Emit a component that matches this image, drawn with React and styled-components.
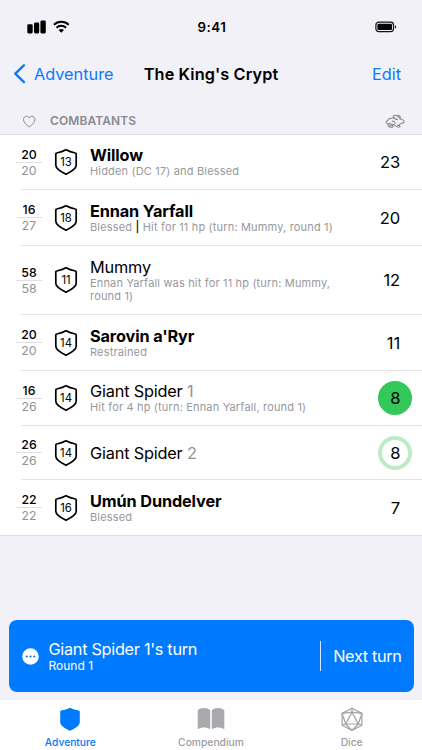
import React from 'react';
import styled, {createGlobalStyle} from 'styled-components';

const GlobalStyle = createGlobalStyle`
    * {
        box-sizing: border-box;
    }

    body {
        margin: 0;
        background: #f2f1f7;
        font-family: Inter, "Liberation Sans", sans-serif;
        color: #000;
    }
`;

const Screen = styled.div`
    display: flex;
    flex-direction: column;
    width: 422px;
    height: 750px;
    overflow: hidden;
    background: #f2f1f7;
`;

const Text = styled.span`
    font-size: ${props => props.$size}px;
    font-weight: ${props => props.$weight || 400};
    line-height: ${props => props.$line || 20}px;
    letter-spacing: ${props => props.$track || 0}px;
    color: ${props => props.$color || 'inherit'};
    white-space: nowrap;
`;

const StatusBar = styled.div`
    display: grid;
    grid-template-columns: 1fr auto 1fr;
    align-items: center;
    height: 47px;
    padding: 7px 25px 0 27px;
`;

const StatusIcons = styled.div`
    display: flex;
    align-items: center;
    justify-content: ${props => props.$end ? 'flex-end' : 'flex-start'};
    gap: 6px;
`;

const NavBar = styled.div`
    display: grid;
    grid-template-columns: 1fr auto 1fr;
    align-items: center;
    height: 54px;
    padding: 0 21px 0 13px;
`;

const BackButton = styled.div`
    display: flex;
    align-items: center;
    gap: 8px;
    color: #0a7aff;
`;

const EditButton = styled.div`
    justify-self: end;
    color: #0a7aff;
`;

const NavTitle = styled.div`
    margin-left: 8px;
`;

const SectionHeader = styled.div`
    display: flex;
    align-items: center;
    height: 34px;
    padding: 7px 17px 0 22px;
    border-bottom: 1px solid #dedee2;
    color: #8a8a8f;
`;

const SectionTitle = styled.div`
    display: flex;
    flex: 1;
    padding-left: 14px;
`;

const List = styled.div`
    background: #fff;
    border-bottom: 1px solid #dedee2;
`;

const Row = styled.div`
    display: flex;
    align-items: center;
    height: ${props => props.$height}px;
    padding-left: 16px;
`;

const Divider = styled.div`
    height: 1px;
    margin-left: 21px;
    background: #e4e4e6;
`;

const HitPoints = styled.div`
    display: flex;
    flex-direction: column;
    align-items: center;
    width: 26px;
`;

const HitPointsLine = styled.div`
    width: 100%;
    height: 1px;
    background: #e0e0e2;
`;

const ArmorClass = styled.div`
    display: grid;
    place-items: center;
    width: 24px;
    margin-left: 12px;

    & > * {
        grid-area: 1 / 1;
    }
`;

const Details = styled.div`
    display: flex;
    flex: 1;
    flex-direction: column;
    padding: ${props => props.$low ? 2 : 1}px 0 0 12px;
`;

const Note = styled.div`
    max-width: 265px;
    font-size: 11px;
    line-height: 13.5px;
    letter-spacing: 0.17px;
    color: #98989d;

    b {
        font-weight: 500;
        color: #000;
    }
`;

const Initiative = styled.div`
    display: flex;
    justify-content: flex-end;
    padding-right: 22px;
`;

const TurnBadge = styled.div`
    display: flex;
    align-items: center;
    justify-content: center;
    width: 34px;
    height: 34px;
    margin-right: 9.7px;
    border-radius: 50%;
    border: 4px solid ${props => props.$active ? '#34c759' : '#bdebc8'};
    background: ${props => props.$active ? '#34c759' : '#fff'};
`;

const Spacer = styled.div`
    flex: 1;
`;

const TurnBar = styled.div`
    display: flex;
    align-items: center;
    height: 71.5px;
    margin: 0 8.5px 8px;
    padding: 1px 12px 0 13px;
    border-radius: 8px;
    background: #007aff;
    color: #fff;
`;

const TurnInfo = styled.div`
    display: flex;
    flex: 1;
    flex-direction: column;
    padding-left: 10px;
`;

const NextTurn = styled.div`
    display: flex;
    align-items: center;
    height: 30px;
    padding-left: 12px;
    border-left: 1px solid #d5e8ff;
`;

const TabBar = styled.div`
    display: grid;
    grid-template-columns: repeat(3, 1fr);
    height: 50.5px;
    background: #fff;
`;

const Tab = styled.div`
    display: flex;
    flex-direction: column;
    align-items: center;
    gap: 3px;
    padding-top: 7px;
    color: ${props => props.$active ? '#007aff' : '#9c9ca1'};
`;

const combatants = [
    {name: 'Willow', bold: true, hp: 20, max: 20, ac: 13, init: 23, height: 54, note: 'Hidden (DC 17) and Blessed'},
    {name: 'Ennan Yarfall', bold: true, hp: 16, max: 27, ac: 18, init: 20, height: 55, note: <>Blessed <b>|</b> Hit for 11 hp (turn: Mummy, round 1)</>},
    {name: 'Mummy', hp: 58, max: 58, ac: 11, init: 12, height: 68, note: 'Ennan Yarfall was hit for 11 hp (turn: Mummy, round 1)'},
    {name: "Sarovin a'Ryr", bold: true, hp: 20, max: 20, ac: 14, init: 11, height: 55, note: 'Restrained'},
    {name: 'Giant Spider', suffix: 1, hp: 16, max: 26, ac: 14, init: 8, height: 54, note: 'Hit for 4 hp (turn: Ennan Yarfall, round 1)', turn: 'active'},
    {name: 'Giant Spider', suffix: 2, hp: 26, max: 26, ac: 14, init: 8, height: 53, turn: 'next'},
    {name: 'Umún Dundelver', bold: true, hp: 22, max: 22, ac: 16, init: 7, height: 55, note: 'Blessed'},
];

const SignalIcon = () => (
    <svg width="20" height="14" viewBox="0 0 20 14" fill="#000">
        <rect x="0.3" y="4.2" width="5.4" height="9.2" rx="1.3" />
        <rect x="7" y="2.6" width="5.2" height="10.8" rx="1.3" />
        <rect x="13.4" y="0.6" width="5.4" height="12.8" rx="1.3" />
    </svg>
);

const WifiIcon = () => (
    <svg width="17" height="14" viewBox="0 0 17 14" fill="none" stroke="#000">
        <path d="M0.9 4.7a10.9 10.9 0 0 1 14.8 0" strokeWidth="2" />
        <path d="M3.5 7.7a7 7 0 0 1 9.6 0" strokeWidth="1.9" />
        <path d="M5.6 10.1a4.1 4.1 0 0 1 5.4 0L8.3 12.8z" fill="#000" stroke="none" />
    </svg>
);

const BatteryIcon = () => (
    <svg width="22" height="12" viewBox="0 0 22 12">
        <rect x="0.9" y="1.2" width="17.6" height="9.4" rx="2.8" fill="none" stroke="#111" strokeWidth="1.2" />
        <rect x="2.4" y="2.7" width="14.6" height="6.4" rx="1.3" />
        <path d="M20 4.2v3.4c.7-.3 1.1-.9 1.1-1.7S20.7 4.5 20 4.2z" />
    </svg>
);

const ChevronIcon = () => (
    <svg width="13" height="20" viewBox="0 0 13 20" fill="none" stroke="currentColor" strokeWidth="2.4" strokeLinecap="round" strokeLinejoin="round">
        <path d="M10.9 1.3 2.3 9.7l8.6 8.4" />
    </svg>
);

const HeartIcon = () => (
    <svg width="14" height="13" viewBox="0 0 14 13" fill="none" stroke="currentColor" strokeWidth="1" strokeLinejoin="round">
        <path d="M7.2 11.9C4.2 9.8 1.5 7.3 1.5 4.5c0-2 1.3-3.3 2.9-3.3 1.2 0 2.2.7 2.8 1.9.6-1.2 1.6-1.9 2.8-1.9 1.6 0 2.9 1.3 2.9 3.3 0 2.8-2.7 5.3-5.7 7.4z" />
    </svg>
);

const HareIcon = () => (
    <svg width="20" height="15" viewBox="0 0 20 15" fill="none" stroke="currentColor" strokeWidth="1.1" strokeLinecap="round" strokeLinejoin="round">
        <path d="M12.5 5.6C10.5 5.300 8.600 3.900 8.200 2.500c-.1-1.100 2.500-1.500 4.200-.6 1.500.8 2.400 2 2.800 3.100 2 .3 3.800 1.600 3.800 2.800 0 1.300-1.500 1.700-3.300 1.700-.9 1.200-2.200 1.900-3.500 2.100" />
        <path d="M12.600 1.900c.2-.7.900-.9 1.500-.5 1 .7 1.400 2 1.300 3.500" />
        <path d="M8.800 4C6 3.700 3.400 4.700 2.500 6.900 1 7.300.8 8.800 1.800 9.400c1.400.7 2.700 0 4.200.4 1.800.5 3.600 1.200 5 2.300 1.200.8 3 1.300 3.800.7.6-.7-.3-1.300-1.600-1.500" />
        <path d="M4.300 9.800c-1 .3-1.400 1.100-1.100 1.900.5 1.200 2.600 1.500 4.100 1.500 1.100-.2 1-1.500 0-1.800l-2.400-.3" />
        <path d="M7.200 7.200c1.700-.4 3 .8 2.700 2.500" />
    </svg>
);

const ShieldOutline = () => (
    <svg width="24" height="28" viewBox="0 0 24 28" fill="none" stroke="#000" strokeWidth="1.7" strokeLinejoin="round">
        <path d="M12 1.7C9 3.3 5.8 4.3 2.7 5a1 1 0 0 0-.9 1V17.2c0 3.9 5.2 6.6 10.2 9.1 5-2.5 10.2-5.2 10.2-9.1V6a1 1 0 0 0-.9-1C18.2 4.3 15 3.3 12 1.7z" />
    </svg>
);

const MoreIcon = () => (
    <svg width="17" height="17" viewBox="0 0 17 17">
        <circle cx="8.5" cy="8.5" r="8.3" fill="#fff" />
        <g fill="#007aff">
            <circle cx="4.7" cy="8.5" r="1.1" />
            <circle cx="8.5" cy="8.5" r="1.1" />
            <circle cx="12.3" cy="8.5" r="1.1" />
        </g>
    </svg>
);

const ShieldIcon = () => (
    <svg width="20" height="25" viewBox="0 0 20 25" fill="currentColor">
        <path d="M10 .7C7.2 2.2 4.1 3 1.3 3.5a1.2 1.2 0 0 0-1.1 1.2V15.2c0 3.7 5 6.2 9.8 8.5 4.8-2.3 9.8-4.8 9.8-8.5V4.7a1.2 1.2 0 0 0-1.1-1.2C15.9 3 12.8 2.2 10 .7z" />
    </svg>
);

const BookIcon = () => (
    <svg width="28" height="25" viewBox="0 0 28 25" fill="#a9a9ae">
        <path d="M.7 3.4C3.2.5 10.3.2 13.2 3.4v18.8c-3.6-2.2-8.9-2.2-12.5 0z" />
        <path d="M14.8 3.4c2.9-3.2 10-2.9 12.5 0v18.8c-3.6-2.2-8.9-2.2-12.5 0z" />
    </svg>
);

const DiceIcon = () => (
    <svg width="22" height="25" viewBox="0 0 22 25" fill="none" stroke="#a0a0a5" strokeWidth="1.2" strokeLinejoin="round">
        <path d="M11 1.2 20.9 6.4v11.8L11 23.5 1.1 18.2V6.4z" />
        <path d="M11 5.2 4.7 17h12.6z" />
        <path d="M11 1.2v4M1.1 6.4 11 5.2l9.9 1.2M1.1 6.4 4.7 17l-3.6 1.2M20.9 6.4 17.3 17l3.6 1.2M4.7 17 11 23.5 17.3 17" />
    </svg>
);

function Combatant({data}) {

    const init = <Text $size={16.5} $track={-0.1}>{data.init}</Text>;

    return (
        <Row $height={data.height}>
            <HitPoints>
                <Text $size={12.3} $weight={500} $line={15}>{data.hp}</Text>
                <HitPointsLine />
                <Text $size={12.3} $line={15} $color="#929297">{data.max}</Text>
            </HitPoints>
            <ArmorClass>
                <ShieldOutline />
                <Text $size={11.3} $line={14}>{data.ac}</Text>
            </ArmorClass>
            <Details $low={!data.note}>
                <Text $size={16.3} $weight={data.bold ? 700 : 400} $line={19} $track={data.bold ? -0.13 : -0.18}>
                    {data.name}
                    {data.suffix && <Text $size={16.3} $line={19} $track={-0.18} $color="#929297"> {data.suffix}</Text>}
                </Text>
                {data.note && <Note>{data.note}</Note>}
            </Details>
            {data.turn
                ? <TurnBadge $active={data.turn === 'active'}>{init}</TurnBadge>
                : <Initiative>{init}</Initiative>}
        </Row>
    )
}

export default function App() {

    return (
        <Screen>
            <GlobalStyle />
            <StatusBar>
                <StatusIcons>
                    <SignalIcon />
                    <WifiIcon />
                </StatusIcons>
                <Text $size={13.3} $weight={600} $track={0.5}>9:41</Text>
                <StatusIcons $end>
                    <BatteryIcon />
                </StatusIcons>
            </StatusBar>
            <NavBar>
                <BackButton>
                    <ChevronIcon />
                    <Text $size={16.3}>Adventure</Text>
                </BackButton>
                <NavTitle>
                    <Text $size={16.3} $weight={600} $track={0.1}>The King's Crypt</Text>
                </NavTitle>
                <EditButton>
                    <Text $size={16.3}>Edit</Text>
                </EditButton>
            </NavBar>
            <SectionHeader>
                <HeartIcon />
                <SectionTitle>
                    <Text $size={12} $weight={600} $line={14} $track={0.1}>COMBATANTS</Text>
                </SectionTitle>
                <HareIcon />
            </SectionHeader>
            <List>
                {combatants.map((data, i) => (
                    <React.Fragment key={i}>
                        {i > 0 && <Divider />}
                        <Combatant data={data} />
                    </React.Fragment>
                ))}
            </List>
            <Spacer />
            <TurnBar>
                <MoreIcon />
                <TurnInfo>
                    <Text $size={16.3} $track={-0.3}>Giant Spider 1's turn</Text>
                    <Text $size={12} $line={14}>Round 1</Text>
                </TurnInfo>
                <NextTurn>
                    <Text $size={16.3} $track={-0.35}>Next turn</Text>
                </NextTurn>
            </TurnBar>
            <TabBar>
                <Tab $active>
                    <ShieldIcon />
                    <Text $size={10.3} $weight={500} $line={14}>Adventure</Text>
                </Tab>
                <Tab>
                    <BookIcon />
                    <Text $size={10.3} $weight={500} $line={14}>Compendium</Text>
                </Tab>
                <Tab>
                    <DiceIcon />
                    <Text $size={10.3} $weight={500} $line={14}>Dice</Text>
                </Tab>
            </TabBar>
        </Screen>
    )
}
